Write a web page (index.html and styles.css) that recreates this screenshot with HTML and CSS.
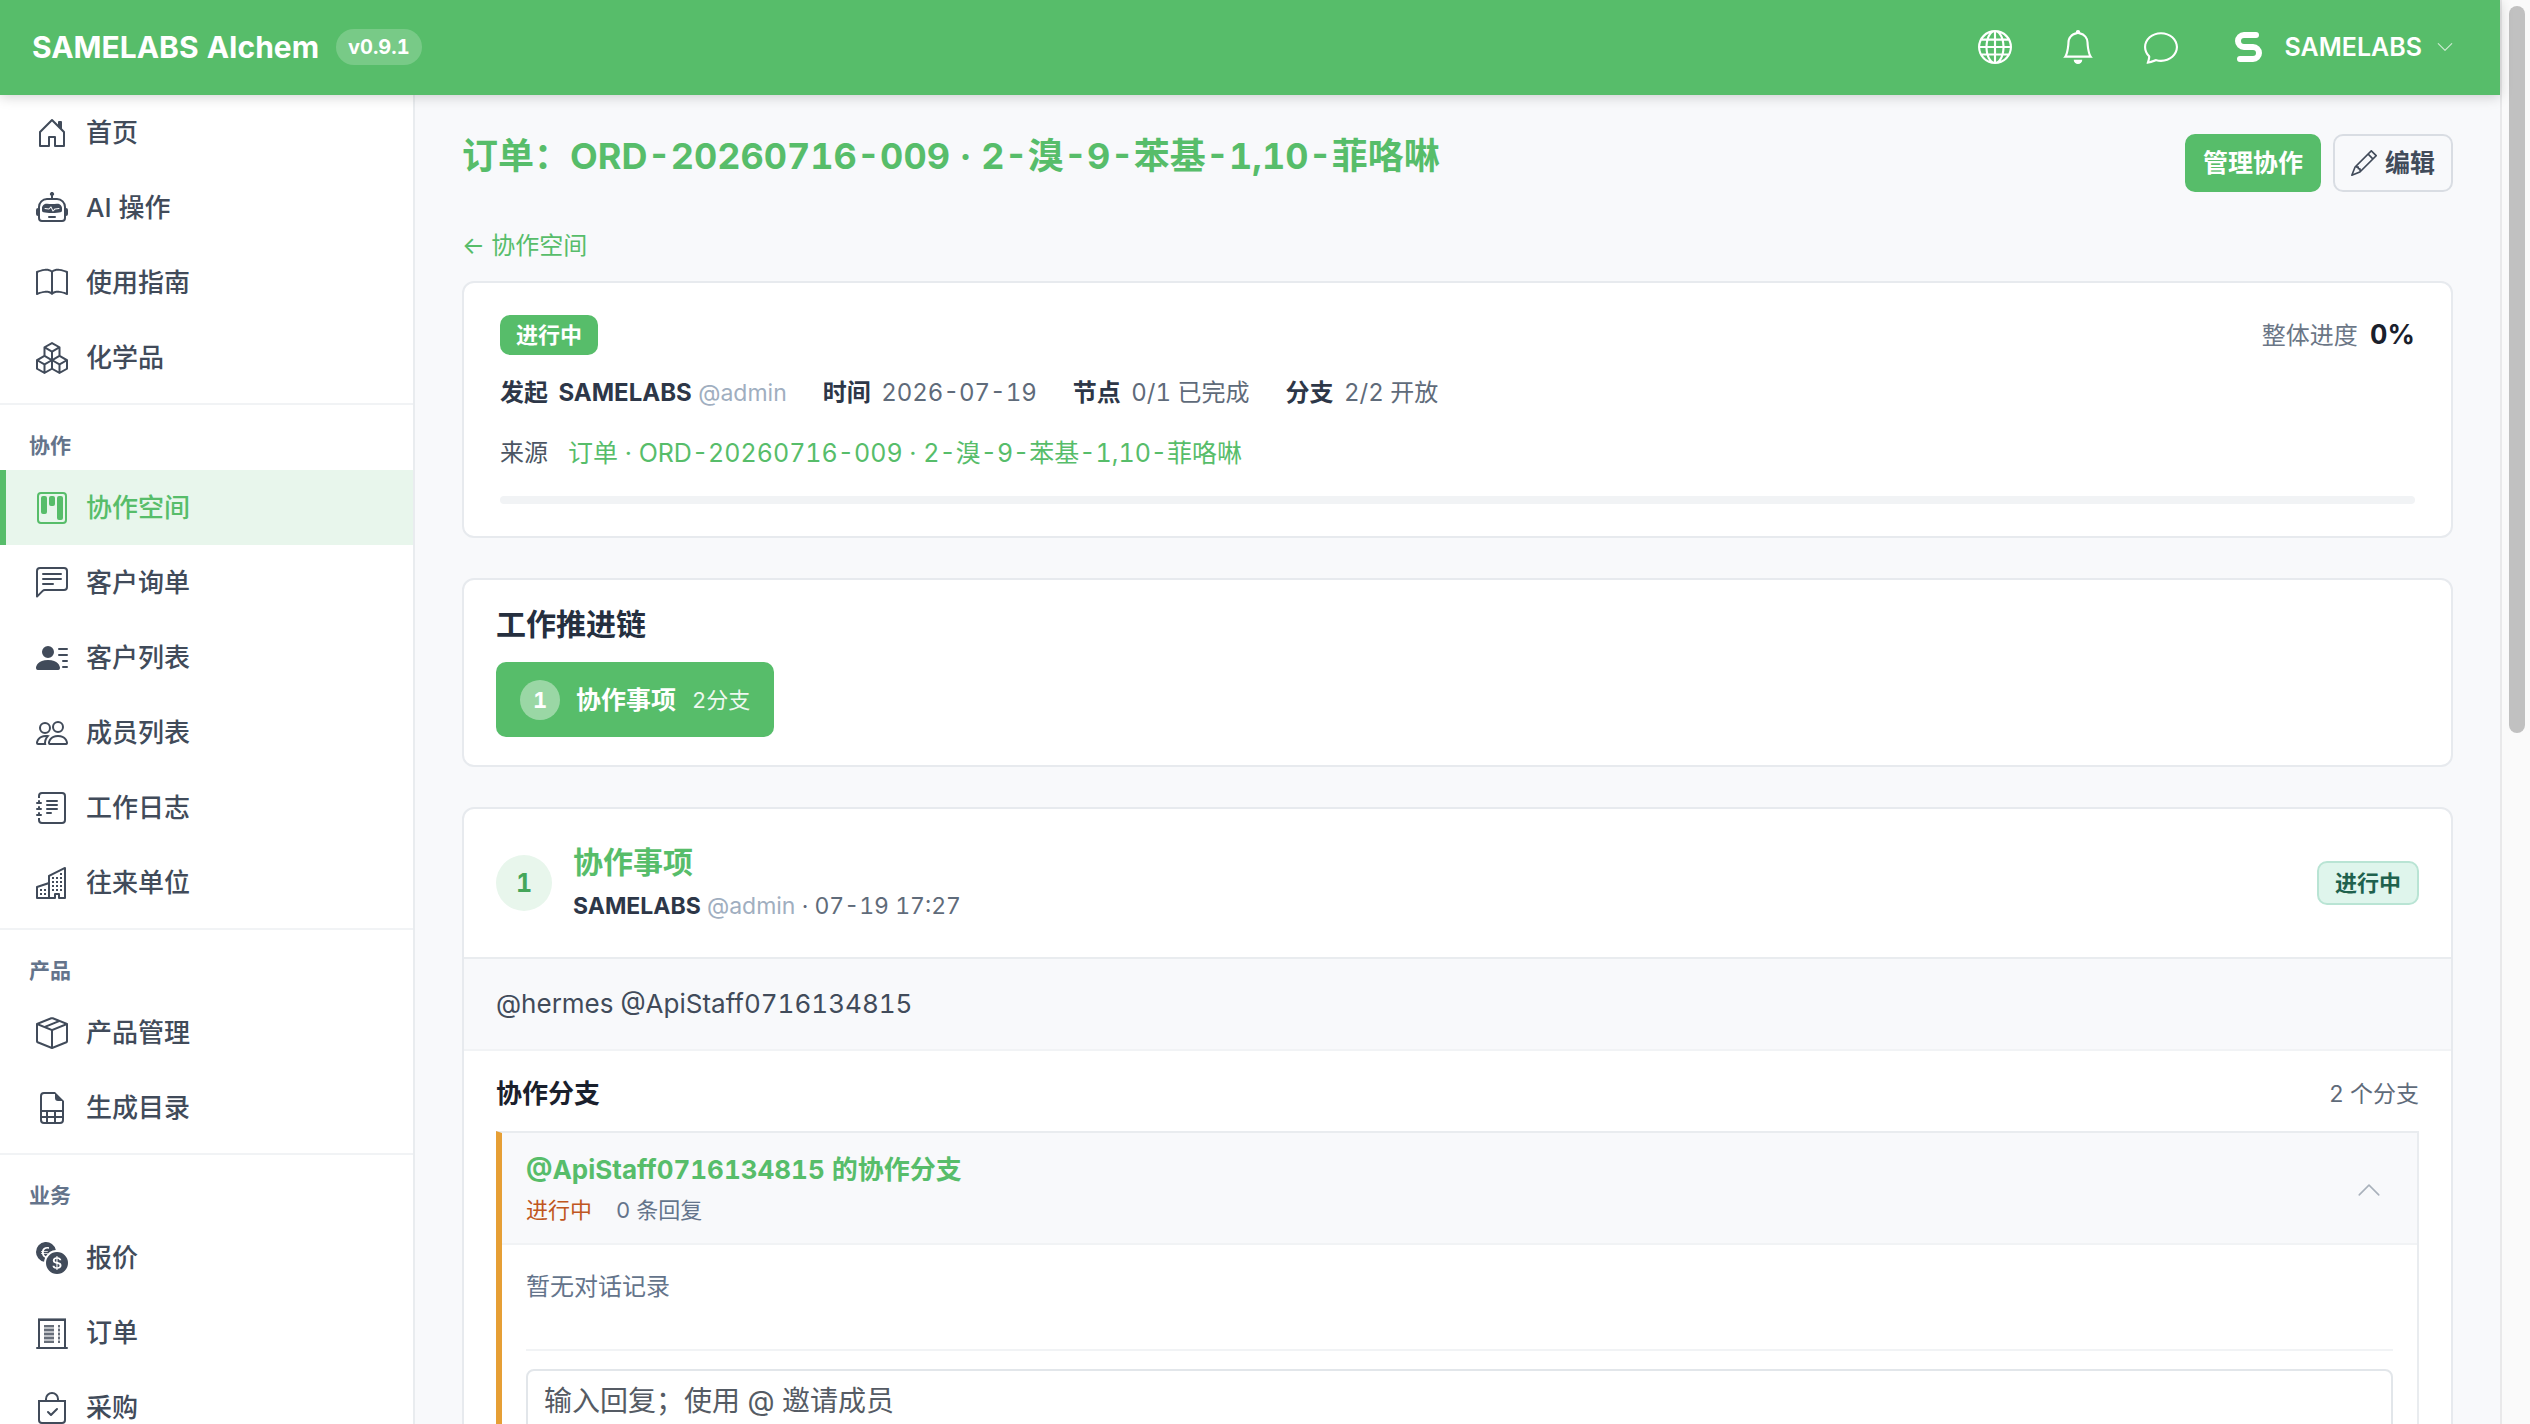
FILE: index.html
```html
<!DOCTYPE html>
<html lang="zh-CN">
<head>
    <meta charset="UTF-8">
    <meta name="viewport" content="width=device-width, initial-scale=1.0">
    <title>SAMELABS AIchem - 协作空间</title>
    <link rel="stylesheet" href="styles.css">
</head>
<body>
    <div class="app">
        <header class="topbar">
            <a class="brand" href="#">SAMELABS AIchem</a>
            <span class="version">v0.9.1</span>
            <div class="topbar-tools">
                <button class="tool" type="button" aria-label="语言">
                    <svg class="icon" viewBox="0 0 16 16"><path d="M0 8a8 8 0 1 1 16 0A8 8 0 0 1 0 8m7.5-6.923c-.67.204-1.335.82-1.887 1.855A8 8 0 0 0 5.145 4H7.5zM4.09 4a9.3 9.3 0 0 1 .64-1.539 7 7 0 0 1 .597-.933A7.03 7.03 0 0 0 2.255 4zm-.582 3.5c.03-.877.138-1.718.312-2.5H1.674a7 7 0 0 0-.656 2.5zM4.847 5a12.5 12.5 0 0 0-.338 2.5H7.5V5zM8.5 5v2.5h2.99a12.5 12.5 0 0 0-.337-2.5zM4.51 8.5a12.5 12.5 0 0 0 .337 2.5H7.5V8.5zm3.99 0V11h2.653c.187-.765.306-1.608.338-2.5zM5.145 12q.208.58.468 1.068c.552 1.035 1.218 1.65 1.887 1.855V12zm.182 2.472a7 7 0 0 1-.597-.933A9.3 9.3 0 0 1 4.09 12H2.255a7 7 0 0 0 3.072 2.472M3.82 11a13.7 13.7 0 0 1-.312-2.5h-2.49c.062.89.291 1.733.656 2.5zm6.853 3.472A7 7 0 0 0 13.745 12H11.91a9.3 9.3 0 0 1-.64 1.539 7 7 0 0 1-.597.933M8.5 12v2.923c.67-.204 1.335-.82 1.887-1.855q.26-.487.468-1.068zm3.68-1h2.146c.365-.767.594-1.61.656-2.5h-2.49a13.7 13.7 0 0 1-.312 2.5m2.802-3.5a7 7 0 0 0-.656-2.5H12.18c.174.782.282 1.623.312 2.5zM11.27 2.461c.247.464.462.98.64 1.539h1.835a7 7 0 0 0-3.072-2.472c.218.284.418.598.597.933M10.855 4a8 8 0 0 0-.468-1.068C9.835 1.897 9.17 1.282 8.5 1.077V4z"/></svg>
                </button>
                <button class="tool" type="button" aria-label="通知">
                    <svg class="icon" viewBox="0 0 16 16"><path d="M8 16a2 2 0 0 0 2-2H6a2 2 0 0 0 2 2M8 1.918l-.797.161A4 4 0 0 0 4 6c0 .628-.134 2.197-.459 3.742-.16.767-.376 1.566-.663 2.258h10.244c-.287-.692-.502-1.49-.663-2.258C12.134 8.197 12 6.628 12 6a4 4 0 0 0-3.203-3.92zM14.22 12c.223.447.481.801.78 1H1c.299-.199.557-.553.78-1C2.68 10.2 3 6.88 3 6c0-2.42 1.72-4.44 4.005-4.901a1 1 0 1 1 1.99 0A5 5 0 0 1 13 6c0 .88.32 4.2 1.22 6"/></svg>
                </button>
                <button class="tool" type="button" aria-label="消息">
                    <svg class="icon" viewBox="0 0 16 16"><path d="M2.678 11.894a1 1 0 0 1 .287.801 11 11 0 0 1-.398 2c1.395-.323 2.247-.697 2.634-.893a1 1 0 0 1 .71-.074A8 8 0 0 0 8 14c3.996 0 7-2.807 7-6s-3.004-6-7-6-7 2.808-7 6c0 1.468.617 2.83 1.678 3.894m-.493 3.905a22 22 0 0 1-.713.129c-.2.032-.352-.176-.273-.362a10 10 0 0 0 .244-.637l.003-.01c.248-.72.45-1.548.524-2.319C.743 11.37 0 9.76 0 8c0-3.866 3.582-7 8-7s8 3.134 8 7-3.582 7-8 7a9 9 0 0 1-2.347-.306c-.52.263-1.639.742-3.468 1.105"/></svg>
                </button>
                <button class="account" type="button">
                    <svg class="account-logo" viewBox="0 0 34 34"><path d="M25 5H13a6 6 0 0 0 0 12h9a6 6 0 0 1 0 12H9"/></svg>
                    <span>SAMELABS</span>
                    <svg class="account-caret" viewBox="0 0 16 16"><path d="M1.646 4.646a.5.5 0 0 1 .708 0L8 10.293l5.646-5.647a.5.5 0 0 1 .708.708l-6 6a.5.5 0 0 1-.708 0l-6-6a.5.5 0 0 1 0-.708"/></svg>
                </button>
            </div>
        </header>

        <div class="layout">
            <nav class="sidebar">
                <div class="nav-group">
                    <a class="nav-item" href="#"><svg class="icon" viewBox="0 0 16 16"><path d="M8.354 1.146a.5.5 0 0 0-.708 0l-6 6A.5.5 0 0 0 1.5 7.5v7a.5.5 0 0 0 .5.5h4.5a.5.5 0 0 0 .5-.5v-4h2v4a.5.5 0 0 0 .5.5H14a.5.5 0 0 0 .5-.5v-7a.5.5 0 0 0-.146-.354L13 5.793V2.5a.5.5 0 0 0-.5-.5h-1a.5.5 0 0 0-.5.5v1.293zM2.5 14V7.707l5.5-5.5 5.5 5.5V14H10v-4a.5.5 0 0 0-.5-.5h-3a.5.5 0 0 0-.5.5v4z"/></svg>首页</a>
                    <a class="nav-item" href="#"><svg class="icon" viewBox="0 0 16 16"><path d="M6 12.5a.5.5 0 0 1 .5-.5h3a.5.5 0 0 1 0 1h-3a.5.5 0 0 1-.5-.5M3 8.062C3 6.76 4.235 5.765 5.53 5.886a26.6 26.6 0 0 0 4.94 0C11.765 5.765 13 6.76 13 8.062v1.157a.93.93 0 0 1-.765.935c-.845.147-2.34.346-4.235.346s-3.39-.2-4.235-.346A.93.93 0 0 1 3 9.219zm4.542-.827a.25.25 0 0 0-.217.068l-.92.9a25 25 0 0 1-1.871-.183.25.25 0 0 0-.068.495c.55.076 1.232.149 2.02.193a.25.25 0 0 0 .189-.071l.754-.736.847 1.71a.25.25 0 0 0 .404.062l.932-.97a25 25 0 0 0 1.922-.188.25.25 0 0 0-.068-.495c-.538.074-1.207.145-1.98.189a.25.25 0 0 0-.166.076l-.754.785-.842-1.7a.25.25 0 0 0-.182-.135"/><path d="M8.5 1.866a1 1 0 1 0-1 0V3h-2A4.5 4.5 0 0 0 1 7.5V8a1 1 0 0 0-1 1v2a1 1 0 0 0 1 1v1a2 2 0 0 0 2 2h10a2 2 0 0 0 2-2v-1a1 1 0 0 0 1-1V9a1 1 0 0 0-1-1v-.5A4.5 4.5 0 0 0 10.5 3h-2zM14 7.5V13a1 1 0 0 1-1 1H3a1 1 0 0 1-1-1V7.5A3.5 3.5 0 0 1 5.5 4h5A3.5 3.5 0 0 1 14 7.5"/></svg>AI 操作</a>
                    <a class="nav-item" href="#"><svg class="icon" viewBox="0 0 16 16"><path d="M1 2.828c.885-.37 2.154-.769 3.388-.893 1.33-.134 2.458.063 3.112.752v9.746c-.935-.53-2.12-.603-3.213-.493-1.18.12-2.37.461-3.287.811zm7.5-.141c.654-.689 1.782-.886 3.112-.752 1.234.124 2.503.523 3.388.893v9.923c-.918-.35-2.107-.692-3.287-.81-1.094-.111-2.278-.039-3.213.492zM8 1.783C7.015.936 5.587.81 4.287.94c-1.514.153-3.042.672-3.994 1.105A.5.5 0 0 0 0 2.5v11a.5.5 0 0 0 .707.455c.882-.4 2.303-.881 3.68-1.02 1.409-.142 2.59.087 3.223.877a.5.5 0 0 0 .78 0c.633-.79 1.814-1.019 3.222-.877 1.378.139 2.8.62 3.681 1.02A.5.5 0 0 0 16 13.5v-11a.5.5 0 0 0-.293-.455c-.952-.433-2.48-.952-3.994-1.105C10.413.809 8.985.936 8 1.783"/></svg>使用指南</a>
                    <a class="nav-item" href="#"><svg class="icon" viewBox="0 0 16 16"><path d="M7.752.066a.5.5 0 0 1 .496 0l3.75 2.143a.5.5 0 0 1 .252.434v3.995l3.498 2A.5.5 0 0 1 16 9.07v4.286a.5.5 0 0 1-.252.434l-3.75 2.143a.5.5 0 0 1-.496 0l-3.502-2-3.502 2.001a.5.5 0 0 1-.496 0l-3.75-2.143A.5.5 0 0 1 0 13.357V9.071a.5.5 0 0 1 .252-.434L3.75 6.638V2.643a.5.5 0 0 1 .252-.434zM4.25 7.504 1.508 9.071l2.742 1.567 2.742-1.567zM7.5 9.933l-2.75 1.571v3.134l2.75-1.571zm1 3.134 2.75 1.571v-3.134L8.5 9.933zm.508-3.996 2.742 1.567 2.742-1.567-2.742-1.567zm2.242-2.433V3.504L8.5 5.076V8.21zM7.5 8.21V5.076L4.75 3.504v3.134zM5.258 2.643 8 4.21l2.742-1.567L8 1.076zM15 9.933l-2.75 1.571v3.134L15 13.067zM3.75 14.638v-3.134L1 9.933v3.134z"/></svg>化学品</a>
                </div>

                <div class="nav-group">
                    <h2 class="nav-title">协作</h2>
                    <a class="nav-item active" href="#"><svg class="icon" viewBox="0 0 16 16"><path d="M13.5 1a1 1 0 0 1 1 1v12a1 1 0 0 1-1 1h-11a1 1 0 0 1-1-1V2a1 1 0 0 1 1-1zm-11-1a2 2 0 0 0-2 2v12a2 2 0 0 0 2 2h11a2 2 0 0 0 2-2V2a2 2 0 0 0-2-2z"/><path d="M6.5 3a1 1 0 0 1 1-1h1a1 1 0 0 1 1 1v3a1 1 0 0 1-1 1h-1a1 1 0 0 1-1-1zm-4 0a1 1 0 0 1 1-1h1a1 1 0 0 1 1 1v7a1 1 0 0 1-1 1h-1a1 1 0 0 1-1-1zm8 0a1 1 0 0 1 1-1h1a1 1 0 0 1 1 1v10a1 1 0 0 1-1 1h-1a1 1 0 0 1-1-1z"/></svg>协作空间</a>
                    <a class="nav-item" href="#"><svg class="icon" viewBox="0 0 16 16"><path d="M14 1a1 1 0 0 1 1 1v8a1 1 0 0 1-1 1H4.414A2 2 0 0 0 3 11.586l-2 2V2a1 1 0 0 1 1-1zM2 0a2 2 0 0 0-2 2v12.793a.5.5 0 0 0 .854.353l2.853-2.853A1 1 0 0 1 4.414 12H14a2 2 0 0 0 2-2V2a2 2 0 0 0-2-2z"/><path d="M3 3.5a.5.5 0 0 1 .5-.5h9a.5.5 0 0 1 0 1h-9a.5.5 0 0 1-.5-.5M3 6a.5.5 0 0 1 .5-.5h9a.5.5 0 0 1 0 1h-9A.5.5 0 0 1 3 6m0 2.5a.5.5 0 0 1 .5-.5h5a.5.5 0 0 1 0 1h-5a.5.5 0 0 1-.5-.5"/></svg>客户询单</a>
                    <a class="nav-item" href="#"><svg class="icon" viewBox="0 0 16 16"><path d="M6 8a3 3 0 1 0 0-6 3 3 0 0 0 0 6m-5 6s-1 0-1-1 1-4 6-4 6 3 6 4-1 1-1 1zM11 3.5a.5.5 0 0 1 .5-.5h4a.5.5 0 0 1 0 1h-4a.5.5 0 0 1-.5-.5m.5 2.5a.5.5 0 0 0 0 1h4a.5.5 0 0 0 0-1zm2 3a.5.5 0 0 0 0 1h2a.5.5 0 0 0 0-1zm0 3a.5.5 0 0 0 0 1h2a.5.5 0 0 0 0-1z"/></svg>客户列表</a>
                    <a class="nav-item" href="#"><svg class="icon" viewBox="0 0 16 16"><path d="M15 14s1 0 1-1-1-4-5-4-5 3-5 4 1 1 1 1zm-7.978-1L7 12.996c.001-.264.167-1.03.76-1.72C8.312 10.629 9.282 10 11 10c1.717 0 2.687.63 3.24 1.276.593.69.758 1.457.76 1.72l-.008.002-.014.002zM11 7a2 2 0 1 0 0-4 2 2 0 0 0 0 4m3-2a3 3 0 1 1-6 0 3 3 0 0 1 6 0M6.936 9.28a6 6 0 0 0-1.23-.247A7 7 0 0 0 5 9c-4 0-5 3-5 4q0 1 1 1h4.216A2.24 2.24 0 0 1 5 13c0-1.01.377-2.042 1.09-2.904.243-.294.526-.569.846-.816M4.92 10A5.5 5.5 0 0 0 4 13H1c0-.26.164-1.03.76-1.724.545-.636 1.492-1.256 3.16-1.275ZM1.5 5.5a3 3 0 1 1 6 0 3 3 0 0 1-6 0m3-2a2 2 0 1 0 0 4 2 2 0 0 0 0-4"/></svg>成员列表</a>
                    <a class="nav-item" href="#"><svg class="icon" viewBox="0 0 16 16"><path d="M5 10.5a.5.5 0 0 1 .5-.5h2a.5.5 0 0 1 0 1h-2a.5.5 0 0 1-.5-.5m0-2a.5.5 0 0 1 .5-.5h5a.5.5 0 0 1 0 1h-5a.5.5 0 0 1-.5-.5m0-2a.5.5 0 0 1 .5-.5h5a.5.5 0 0 1 0 1h-5a.5.5 0 0 1-.5-.5m0-2a.5.5 0 0 1 .5-.5h5a.5.5 0 0 1 0 1h-5a.5.5 0 0 1-.5-.5"/><path d="M3 0h10a2 2 0 0 1 2 2v12a2 2 0 0 1-2 2H3a2 2 0 0 1-2-2v-1h1v1a1 1 0 0 0 1 1h10a1 1 0 0 0 1-1V2a1 1 0 0 0-1-1H3a1 1 0 0 0-1 1v1H1V2a2 2 0 0 1 2-2"/><path d="M1 5v-.5a.5.5 0 0 1 1 0V5h.5a.5.5 0 0 1 0 1h-2a.5.5 0 0 1 0-1zm0 3v-.5a.5.5 0 0 1 1 0V8h.5a.5.5 0 0 1 0 1h-2a.5.5 0 0 1 0-1zm0 3v-.5a.5.5 0 0 1 1 0v.5h.5a.5.5 0 0 1 0 1h-2a.5.5 0 0 1 0-1z"/></svg>工作日志</a>
                    <a class="nav-item" href="#"><svg class="icon" viewBox="0 0 16 16"><path d="M14.763.075A.5.5 0 0 1 15 .5v15a.5.5 0 0 1-.5.5h-3a.5.5 0 0 1-.5-.5V14h-1v1.5a.5.5 0 0 1-.5.5h-9a.5.5 0 0 1-.5-.5V10a.5.5 0 0 1 .342-.474L6 7.64V4.5a.5.5 0 0 1 .276-.447l8-4a.5.5 0 0 1 .487.022M6 8.694 1 10.36V15h5zM7 15h2v-1.5a.5.5 0 0 1 .5-.5h2a.5.5 0 0 1 .5.5V15h2V1.309l-7 3.5z"/><path d="M2 11h1v1H2zm2 0h1v1H4zm-2 2h1v1H2zm2 0h1v1H4zm4-4h1v1H8zm2 0h1v1h-1zm-2 2h1v1H8zm2 0h1v1h-1zm2-2h1v1h-1zm0 2h1v1h-1zM8 7h1v1H8zm2 0h1v1h-1zm2 0h1v1h-1zM8 5h1v1H8zm2 0h1v1h-1zm2 0h1v1h-1zm0-2h1v1h-1z"/></svg>往来单位</a>
                </div>

                <div class="nav-group">
                    <h2 class="nav-title">产品</h2>
                    <a class="nav-item" href="#"><svg class="icon" viewBox="0 0 16 16"><path d="M8.186 1.113a.5.5 0 0 0-.372 0L1.846 3.5l2.404.961L10.404 2zm3.564 1.426L5.596 5 8 5.961 14.154 3.5zm3.25 1.7-6.5 2.6v7.922l6.5-2.6V4.24zM7.5 14.762V6.838L1 4.239v7.923zM7.443.184a1.5 1.5 0 0 1 1.114 0l7.129 2.852A.5.5 0 0 1 16 3.5v8.662a1 1 0 0 1-.629.928l-7.185 2.874a.5.5 0 0 1-.372 0L.63 13.09a1 1 0 0 1-.63-.928V3.5a.5.5 0 0 1 .314-.464z"/></svg>产品管理</a>
                    <a class="nav-item" href="#"><svg class="icon" viewBox="0 0 16 16"><path d="M14 14V4.5L9.5 0H4a2 2 0 0 0-2 2v12a2 2 0 0 0 2 2h8a2 2 0 0 0 2-2M9.5 3A1.5 1.5 0 0 0 11 4.5h2V9H3V2a1 1 0 0 1 1-1h5.5zM3 12v-2h2v2zm0 1h2v2H4a1 1 0 0 1-1-1zm3 2v-2h3v2zm4 0v-2h3v1a1 1 0 0 1-1 1zm3-3h-3v-2h3zm-7 0v-2h3v2z"/></svg>生成目录</a>
                </div>

                <div class="nav-group">
                    <h2 class="nav-title">业务</h2>
                    <a class="nav-item" href="#"><svg class="icon" viewBox="0 0 16 16"><path d="M0 5a5 5 0 0 0 4.027 4.905 6.5 6.5 0 0 1 .544-2.073C3.695 7.536 3.132 6.864 3 5.91h-.5v-.426h.466V5.05q-.001-.07.004-.135H2.5v-.427h.511C3.236 3.24 4.213 2.5 5.681 2.5c.316 0 .59.031.819.085v.733a3.5 3.5 0 0 0-.815-.082c-.919 0-1.538.466-1.734 1.252h1.917v.427h-1.98q-.004.07-.003.147v.422h1.983v.427H3.93c.118.602.468 1.03 1.005 1.229a6.5 6.5 0 0 1 4.97-3.113A5.002 5.002 0 0 0 0 5m16 5.5a5.5 5.5 0 1 1-11 0 5.5 5.5 0 0 1 11 0m-7.75 1.322c.069.835.746 1.485 1.964 1.562V14h.54v-.62c1.259-.086 1.996-.74 1.996-1.69 0-.865-.563-1.31-1.57-1.54l-.426-.1V8.374c.54.06.884.347.966.745h.948c-.07-.804-.779-1.433-1.914-1.502V7h-.54v.629c-1.076.103-1.808.732-1.808 1.622 0 .787.544 1.288 1.45 1.493l.358.085v1.78c-.554-.08-.92-.376-1.003-.787zm1.96-1.895c-.532-.12-.82-.364-.82-.732 0-.41.311-.719.824-.809v1.54h-.005zm.622 1.044c.645.145.943.38.943.796 0 .474-.37.8-1.02.86v-1.674z"/></svg>报价</a>
                    <a class="nav-item" href="#"><svg class="icon" viewBox="0 0 16 16"><path d="M1 1h14v14h.5a.5.5 0 0 1 0 1H.5a.5.5 0 0 1 0-1H1zm1 1v13h12V2z"/><path opacity=".6" d="M1 .5h14v1H1z"/><path opacity=".7" d="M4 4h5v1H4zm0 2h5v1H4zm0 2h5v1H4zm0 2h5v1H4zm0 2h5v1H4zm7-8h1v1h-1zm0 2h1v1h-1zm0 2h1v1h-1zm0 2h1v1h-1zm0 2h1v1h-1z"/><path opacity=".35" d="M4 4h5v9H4zm7 0h1v9h-1z"/></svg>订单</a>
                    <a class="nav-item" href="#"><svg class="icon" viewBox="0 0 16 16"><path d="M10.854 8.146a.5.5 0 0 1 0 .708l-3 3a.5.5 0 0 1-.708 0l-1.5-1.5a.5.5 0 1 1 .708-.708L7.5 10.793l2.646-2.647a.5.5 0 0 1 .708 0"/><path d="M8 1a2.5 2.5 0 0 1 2.5 2.5V4h-5v-.5A2.5 2.5 0 0 1 8 1m3.5 3v-.5a3.5 3.5 0 1 0-7 0V4H1v10a2 2 0 0 0 2 2h10a2 2 0 0 0 2-2V4zM2 5h12v9a1 1 0 0 1-1 1H3a1 1 0 0 1-1-1z"/></svg>采购</a>
                </div>
            </nav>

            <main class="content">
                <div class="page-head">
                    <h1>订单：ORD-20260716-009 · 2-溴-9-苯基-1,10-菲咯啉</h1>
                    <div class="page-actions">
                        <button class="btn btn-primary" type="button">管理协作</button>
                        <button class="btn btn-outline" type="button"><svg class="btn-icon" viewBox="0 0 16 16"><path d="M12.146.146a.5.5 0 0 1 .708 0l3 3a.5.5 0 0 1 0 .708l-10 10a.5.5 0 0 1-.168.11l-5 2a.5.5 0 0 1-.65-.65l2-5a.5.5 0 0 1 .11-.168zM11.207 2.5 13.5 4.793 14.793 3.5 12.5 1.207zm1.586 3L10.5 3.207 4 9.707V10h.5a.5.5 0 0 1 .5.5v.5h.5a.5.5 0 0 1 .5.5v.5h.293zm-9.761 5.175-.106.106-1.528 3.821 3.821-1.528.106-.106A.5.5 0 0 1 5 12.5V12h-.5a.5.5 0 0 1-.5-.5V11h-.5a.5.5 0 0 1-.468-.325"/></svg>编辑</button>
                    </div>
                </div>
                <a class="back-link" href="#">← 协作空间</a>

                <section class="card summary">
                    <div class="summary-top">
                        <span class="badge-solid">进行中</span>
                        <span class="overall">整体进度 <strong>0%</strong></span>
                    </div>
                    <div class="summary-meta">
                        <span><b class="label">发起</b> <b>SAMELABS</b> <span class="handle">@admin</span></span>
                        <span><b class="label">时间</b> 2026-07-19</span>
                        <span><b class="label">节点</b> 0/1 已完成</span>
                        <span><b class="label">分支</b> 2/2 开放</span>
                    </div>
                    <div class="summary-source">
                        <span>来源</span>
                        <a href="#">订单 · ORD-20260716-009 · 2-溴-9-苯基-1,10-菲咯啉</a>
                    </div>
                    <div class="progress"></div>
                </section>

                <section class="card chain">
                    <h2>工作推进链</h2>
                    <button class="chain-node" type="button">
                        <span class="chain-num">1</span>
                        <strong>协作事项</strong>
                        <span class="chain-count">2分支</span>
                    </button>
                </section>

                <section class="card task">
                    <div class="task-head">
                        <span class="task-num">1</span>
                        <div class="task-info">
                            <h2>协作事项</h2>
                            <p><b>SAMELABS</b> <span class="handle">@admin</span> · 07-19 17:27</p>
                        </div>
                        <span class="badge-soft">进行中</span>
                    </div>
                    <div class="task-desc">@hermes @ApiStaff0716134815</div>
                    <div class="branches">
                        <div class="branches-head">
                            <h3>协作分支</h3>
                            <span>2 个分支</span>
                        </div>
                        <article class="branch">
                            <div class="branch-head">
                                <div>
                                    <h4>@ApiStaff0716134815 的协作分支</h4>
                                    <p><span class="status">进行中</span><span>0 条回复</span></p>
                                </div>
                                <button class="branch-toggle" type="button" aria-label="收起">
                                    <svg viewBox="0 0 16 16"><path d="M7.646 4.646a.5.5 0 0 1 .708 0l6 6a.5.5 0 0 1-.708.708L8 5.707l-5.646 5.647a.5.5 0 0 1-.708-.708z"/></svg>
                                </button>
                            </div>
                            <div class="branch-body">
                                <p class="empty">暂无对话记录</p>
                                <form class="reply">
                                    <textarea aria-label="回复" placeholder="输入回复；使用 @ 邀请成员"></textarea>
                                </form>
                            </div>
                        </article>
                    </div>
                </section>
            </main>
        </div>
    </div>
    <div class="scroll-track"><div class="scroll-thumb"></div></div>
</body>
</html>
```

FILE: styles.css
```css
* {
    margin: 0;
    padding: 0;
    box-sizing: border-box;
}
body {
    display: flex;
    height: 100vh;
    overflow: hidden;
    background: #f8f9fb;
    color: #4b5563;
    font-family: Inter, "Noto Sans CJK SC", sans-serif;
    font-size: 24px;
    font-variant-numeric: tabular-nums;
    line-height: 36px;
}
a {
    color: inherit;
    text-decoration: none;
}
button {
    border: none;
    background: none;
    color: inherit;
    font: inherit;
    font-variant-numeric: tabular-nums;
    cursor: pointer;
}
svg {
    flex: none;
    fill: currentColor;
}
b {
    font-weight: 700;
    color: #2d3748;
}
.icon {
    width: 32px;
    height: 32px;
}
.app {
    flex: 1;
    min-width: 0;
    display: flex;
    flex-direction: column;
}

/* barra superior */
.topbar {
    position: relative;
    z-index: 1;
    flex: none;
    display: flex;
    align-items: center;
    height: 95px;
    padding: 0 46px 2px 32px;
    background: #57bd6a;
    color: #fff;
    box-shadow: 0 2px 12px rgba(0,0,0,0.18);
}
.brand {
    font-size: 30px;
    font-weight: 700;
}
.version {
    margin-left: 17px;
    padding: 0 12px;
    border-radius: 18px;
    background: rgba(255,255,255,0.2);
    font-size: 20px;
    font-weight: 700;
}
.topbar-tools {
    display: flex;
    align-items: center;
    margin-left: auto;
}
.tool {
    display: flex;
    margin-right: 49px;
}
.tool .icon {
    width: 34px;
    height: 34px;
}
.account {
    display: flex;
    align-items: center;
    font-size: 25px;
    font-weight: 600;
}
.account-logo {
    width: 34px;
    height: 34px;
    margin: 0 20px 0 4px;
    fill: none;
    stroke: currentColor;
    stroke-width: 6;
    stroke-linecap: round;
}
.account-caret {
    width: 18px;
    height: 18px;
    margin-left: 14px;
    opacity: 0.7;
}

.layout {
    flex: 1;
    min-height: 0;
    display: flex;
}

/* menú lateral */
.sidebar {
    flex: none;
    width: 415px;
    overflow: hidden;
    background: #fff;
    border-right: 2px solid #e9ecef;
}
.nav-group {
    padding-bottom: 8px;
    border-bottom: 2px solid #f1f3f5;
}
.nav-title {
    padding: 25px 29px 9px;
    color: #64748b;
    font-size: 21px;
    font-weight: 600;
    line-height: 31px;
}
.nav-item {
    display: flex;
    align-items: center;
    gap: 18px;
    height: 75px;
    padding-left: 30px;
    border-left: 6px solid transparent;
    color: #414b5a;
    font-size: 26px;
    font-weight: 500;
}
.nav-item.active {
    border-left-color: #57bd6a;
    background: #e8f6ec;
    color: #57bd6a;
}

/* contenido */
.content {
    flex: 1;
    min-width: 0;
    overflow: hidden;
    padding: 39px 47px 0 47px;
}
.page-head {
    display: flex;
    justify-content: space-between;
    margin-bottom: 36px;
}
h1 {
    color: #57bd6a;
    font-size: 36px;
    font-weight: 700;
    line-height: 44px;
}
.page-actions {
    display: flex;
    gap: 12px;
}
.btn {
    display: flex;
    align-items: center;
    gap: 8px;
    height: 58px;
    padding: 0 16px;
    border: 2px solid #57bd6a;
    border-radius: 10px;
    font-size: 25px;
    font-weight: 600;
}
.btn-primary {
    background: #57bd6a;
    color: #fff;
}
.btn-outline {
    border-color: #d9dde3;
    color: #414b5a;
}
.btn-icon {
    width: 26px;
    height: 26px;
}
.back-link {
    display: block;
    margin-bottom: 17px;
    color: #57bd6a;
}
.card {
    margin-bottom: 40px;
    border: 2px solid #e7eaee;
    border-radius: 12px;
    background: #fff;
}
.handle {
    color: #a0aec0;
    font-size: 23px;
}

.summary {
    padding: 32px 36px 32px;
}
.summary-top {
    display: flex;
    justify-content: space-between;
    align-items: center;
}
.badge-solid {
    padding: 0 16px;
    border-radius: 10px;
    background: #57bd6a;
    color: #fff;
    font-size: 22px;
    font-weight: 600;
    line-height: 40px;
}
.overall {
    color: #6b7686;
}
.overall strong {
    margin-left: 6px;
    color: #1a202c;
    font-size: 27px;
}
.summary-meta {
    display: flex;
    gap: 36px;
    margin-top: 20px;
    color: #5f6b7a;
}
.summary-meta .label {
    margin-right: 4px;
}
.summary-source {
    display: flex;
    gap: 20px;
    margin: 24px 0 25px;
}
.summary-source a {
    color: #57bd6a;
    font-size: 25px;
}
.progress {
    height: 8px;
    border-radius: 4px;
    background: #f1f3f5;
}

.chain {
    padding: 21px 32px 28px;
}
.chain h2 {
    margin-bottom: 15px;
    color: #252f3f;
    font-size: 30px;
    line-height: 46px;
}
.chain-node {
    display: flex;
    align-items: center;
    gap: 16px;
    height: 75px;
    padding: 0 24px;
    border-radius: 10px;
    background: #57bd6a;
    color: #fff;
    font-size: 25px;
}
.chain-num {
    width: 40px;
    border-radius: 50%;
    background: rgba(255,255,255,0.4);
    font-size: 22px;
    font-weight: 700;
    line-height: 40px;
}
.chain-count {
    font-size: 22px;
    opacity: 0.9;
}

.task-head {
    display: flex;
    align-items: center;
    padding: 30px 32px;
    border-bottom: 2px solid #e9ecef;
}
.task-num {
    width: 56px;
    border-radius: 50%;
    background: #e8f6ec;
    color: #45a65a;
    font-size: 25px;
    font-weight: 700;
    line-height: 56px;
    text-align: center;
}
.task-info {
    flex: 1;
    margin-left: 21px;
}
.task-info h2 {
    color: #57bd6a;
    font-size: 30px;
    font-weight: 600;
    line-height: 46px;
}
.task-info p {
    color: #5f6b7a;
    font-size: 23px;
    line-height: 42px;
}
.badge-soft {
    padding: 0 16px;
    border: 2px solid #b9e4d4;
    border-radius: 10px;
    background: #dff5ec;
    color: #20614d;
    font-size: 22px;
    font-weight: 600;
    line-height: 40px;
}
.task-desc {
    padding: 25px 32px;
    border-bottom: 2px solid #f1f3f5;
    background: #f8f9fb;
    color: #414b5a;
    font-size: 26px;
    line-height: 40px;
}
.branches {
    padding: 23px 32px 0;
}
.branches-head {
    display: flex;
    justify-content: space-between;
    align-items: center;
    margin-bottom: 17px;
    color: #5f6b7a;
    font-size: 23px;
    line-height: 40px;
}
.branches-head h3 {
    color: #1a202c;
    font-size: 26px;
    font-weight: 600;
}
.branch {
    border: 2px solid #e9ecef;
    border-left: 6px solid #e69f35;
}
.branch-head {
    display: flex;
    justify-content: space-between;
    align-items: center;
    padding: 16px 35px 13px 24px;
    border-bottom: 2px solid #f1f3f5;
    background: #f8f9fb;
}
.branch-head h4 {
    color: #57bd6a;
    font-size: 26px;
    line-height: 41px;
}
.branch-head p {
    display: flex;
    gap: 24px;
    color: #64748b;
    font-size: 22px;
    line-height: 40px;
}
.branch-head .status {
    color: #c05621;
}
.branch-toggle svg {
    display: block;
    width: 26px;
    height: 26px;
    color: #a9b1bb;
}
.branch-body {
    padding: 24px;
}
.empty {
    margin-bottom: 44px;
    color: #64748b;
}
.reply {
    padding-top: 18px;
    border-top: 2px solid #f1f3f5;
}
.reply textarea {
    display: block;
    width: 100%;
    height: 160px;
    padding: 10px 16px;
    border: 2px solid #e2e6ea;
    border-radius: 8px;
    font: inherit;
    font-size: 28px;
    line-height: 40px;
    resize: none;
}
.reply textarea::placeholder {
    color: #555b64;
}

/* barra de desplazamiento */
.scroll-track {
    flex: none;
    width: 30px;
    padding: 6px 6px 6px 7px;
    border-left: 2px solid #e9e9ea;
    background: #fafafa;
}
.scroll-thumb {
    width: 16px;
    height: calc(52% - 7px);
    border-radius: 8px;
    background: #c1c1c1;
}
```
